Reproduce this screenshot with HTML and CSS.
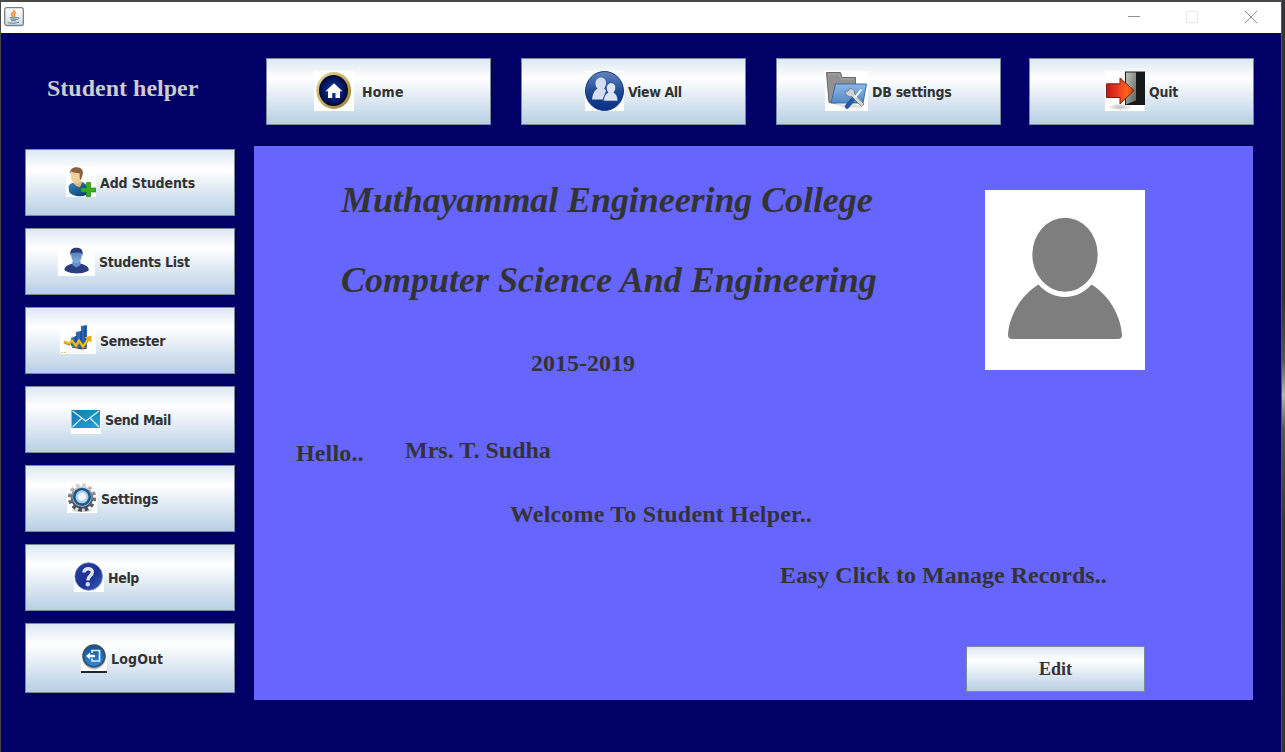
FILE: index.html
```html
<!DOCTYPE html>
<html lang="en">
<head>
<meta charset="utf-8">
<title>Student helper</title>
<link rel="stylesheet" href="styles.css">
</head>
<body>
<div class="window">
  <div class="titlebar">
    <svg class="java" width="20" height="20" viewBox="0 0 20 20">
      <defs><linearGradient id="jg" x1="0" y1="0" x2="0" y2="1"><stop offset="0" stop-color="#fff"/><stop offset="1" stop-color="#dcdcdc"/></linearGradient></defs>
      <rect x=".7" y=".7" width="18.6" height="17.8" rx="2" fill="url(#jg)" stroke="#6d8496" stroke-width="1.3"/>
      <path d="M10.500 3c.8 1.500-3 2.300-3 4.300 0 1 .8 1.500 1.500 2.500M12 5.500c-2.500 1-2.500 2-1.500 2.800.5.700 0 1.200-.5 1.700" fill="none" stroke="#e8872c" stroke-width="1.500"/>
      <path d="M5.500 10.700h8M6.500 12.200h6.500M7 13.700h5M13.500 10.500c2-.3 2 1.500-.5 2M3.500 15.500c3 1 8 1 11.500-.3" fill="none" stroke="#5382a1" stroke-width="1"/>
    </svg>
    <svg class="controls" width="134" height="16" viewBox="0 0 134 16" fill="none" shape-rendering="crispEdges">
      <path d="M1 7.500h12" stroke="#929292"/>
      <rect x="59.500" y="2.500" width="11" height="11" stroke="#e8e8e8"/>
      <path d="M118 2l12 12M130 2l-12 12" stroke="#8a8a8a" shape-rendering="auto"/>
    </svg>
  </div>
  <div class="header">
    <div class="brand">Student helper</div>
    <div class="nav">
      <button class="btn home">
        <svg width="40" height="40" viewBox="0 0 40 40">
          <defs><linearGradient id="gold" x1="0" y1="0" x2="1" y2="1"><stop offset="0" stop-color="#e4d8a0"/><stop offset=".5" stop-color="#c5ad62"/><stop offset="1" stop-color="#9a7a30"/></linearGradient>
          <radialGradient id="navy"><stop offset="0" stop-color="#1448a0"/><stop offset=".65" stop-color="#041a6a"/><stop offset="1" stop-color="#010830"/></radialGradient></defs>
          <rect width="40" height="40" fill="#fff"/>
          <ellipse cx="19.700" cy="19.500" rx="17.500" ry="18.500" fill="url(#gold)"/>
          <ellipse cx="19.500" cy="19.500" rx="14.500" ry="15.500" fill="url(#navy)"/>
          <path d="M20 12.300l8.500 8H26V27h-4.500v-5h-3.300v5H14v-6.700h-2.500z" fill="#fff"/>
        </svg><span class="label">Home</span>
      </button>
      <button class="btn view">
        <svg width="39" height="40" viewBox="0 0 39 40">
          <defs><linearGradient id="vb" x1="0" y1="0" x2="0" y2="1"><stop offset="0" stop-color="#6485bb"/><stop offset=".3" stop-color="#3b63a7"/><stop offset=".55" stop-color="#194691"/><stop offset="1" stop-color="#0c2f87"/></linearGradient></defs>
          <rect width="39" height="40" fill="#fff"/>
          <ellipse cx="19.500" cy="20" rx="19" ry="19.500" fill="url(#vb)" stroke="#163b7b"/>
          <path d="M7 28.500c.5-5 2-8.500 5.500-11-3.500-3-2.500-10.700 3.300-11 6 .2 6.500 7 3.300 11l2 2-3.300 9z" fill="#d5deee"/>
          <path d="M18.500 30c.3-4 1.500-7 4.500-8.500-3-4-1.500-9.500 3.200-9.800 4.800.3 5.800 6 2.600 9.800 3 1.500 3.700 4.500 4.200 8.500z" fill="#dce4f2" stroke="#2a5097" stroke-width=".7"/>
        </svg><span class="label">View All</span>
      </button>
      <button class="btn db">
        <svg width="43" height="40" viewBox="0 0 43 40">
          <defs><linearGradient id="fold" x1="0" y1="0" x2="0" y2="1"><stop offset="0" stop-color="#8cb8e8"/><stop offset="1" stop-color="#5287c6"/></linearGradient></defs>
          <rect width="43" height="40" fill="#fff"/>
          <path d="M5 32l17 2 8-1 8 4-20-1z" fill="#ddd"/>
          <path d="M1.500 1.500h14l1.500 5h13.500v7L11 32 4 31.500z" fill="#929090" stroke="#696969"/>
          <path d="M3.500 3h10.500l2 5H29" fill="none" stroke="#aaa9a5"/>
          <path d="M10.500 13H41.500L38 32H6z" fill="url(#fold)" stroke="#3d6ba7"/>
          <path d="M20 20c3 .8 4 0 4.500-2.500 3.500 0 5.500 2 5 5l9.500 10.500-2.500 2.500-10-10c-3 .5-6-1.500-6.500-5.500z" fill="#d0d2d4" stroke="#66717e" stroke-width=".8"/>
          <path d="M36.500 18.500l-9 11" stroke="#e8edf2" stroke-width="2"/><path d="M27.500 29l-5.500 6.500" stroke="#245a9f" stroke-width="4.500" stroke-linecap="round"/>
        </svg><span class="label">DB settings</span>
      </button>
      <button class="btn quit">
        <svg width="40" height="40" viewBox="0 0 40 40">
          <defs><linearGradient id="red" x1="0" y1="0" x2="1" y2="0"><stop offset="0" stop-color="#c5161b"/><stop offset=".4" stop-color="#e83a20"/><stop offset=".75" stop-color="#ff641b"/><stop offset="1" stop-color="#d43817"/></linearGradient>
          <linearGradient id="door" x1="0" y1="0" x2="1" y2="1"><stop offset="0" stop-color="#c2c5bd"/><stop offset="1" stop-color="#596057"/></linearGradient>
          <radialGradient id="sh"><stop offset="0" stop-color="#bbb"/><stop offset="1" stop-color="#fff"/></radialGradient></defs>
          <rect width="40" height="40" fill="#fff"/>
          <ellipse cx="15" cy="36" rx="13" ry="3.500" fill="url(#sh)"/>
          <rect x="20" y=".5" width="20" height="33.500" fill="#171819"/>
          <path d="M21 1.500h10v28L21 33.500z" fill="url(#door)"/>
          <path d="M1.500 12.800H15V7l14 12.500L15 33v-6.500H1.500z" fill="url(#red)" stroke="#702117"/>
        </svg><span class="label">Quit</span>
      </button>
    </div>
  </div>
  <div class="main">
    <div class="sidebar">
      <button class="btn add">
        <svg width="30" height="30" viewBox="0 0 30 30">
          <defs><linearGradient id="blu" x1="0" y1="0" x2="1" y2="1"><stop offset="0" stop-color="#3587b8"/><stop offset="1" stop-color="#07396d"/></linearGradient></defs>
          <rect width="30" height="30" fill="#fff"/>
          <path d="M2.500 19c2-3 4-3.500 6.500-3.500l6-.5c4 .5 6 3 6.500 7l-1 6C14 30.500 5 29 3 24.500z" fill="url(#blu)"/>
          <path d="M7 14l7-1 2 3-2 4c-3 0-5-2-7-4z" fill="#e5b77d"/>
          <ellipse cx="10.300" cy="9" rx="5.500" ry="7.500" fill="#f0cf9c"/>
          <path d="M4.200 7C3.800 2.500 6 .3 10.500.3c5 0 7.500 3.200 6 8L14.800 13c-1-1-1.500-3-1-6.500C10 6 7 5.500 5.500 4.500z" fill="#866242"/>
          <path d="M20.500 15.500h4V21H30v4h-5.500v5h-4v-5H15v-4h5.500z" fill="#3aac22" stroke="#238a18" stroke-width=".7"/>
        </svg><span class="label">Add Students</span>
      </button>
      <button class="btn list">
        <svg width="37" height="30" viewBox="0 0 37 30">
          <defs><linearGradient id="face" x1="0" y1="0" x2="0" y2="1"><stop offset="0" stop-color="#466eb0"/><stop offset="1" stop-color="#83afe0"/></linearGradient></defs>
          <rect width="37" height="30" fill="#fff"/>
          <path d="M6.500 23c1-3.500 4-4 8-5.500h8c4 1.500 7.500 2 8.500 6.500-4 4.500-20 4.500-24.500 0z" fill="#293f82"/>
          <path d="M14.500 15h8v4l-4 2.500-4-2.500z" fill="#6590ca"/>
          <ellipse cx="18.500" cy="9.500" rx="5.300" ry="7.500" fill="url(#face)"/>
          <path d="M12.500 10C11.500 4 14 1.800 18.500 1.800S25.500 4 24.500 10c-.5-3-1.500-3.500-6-3.500S13 7 12.500 10z" fill="#263c70"/>
        </svg><span class="label">Students List</span>
      </button>
      <button class="btn semester">
        <svg width="36" height="29" viewBox="0 0 36 29">
          <rect width="36" height="29" fill="#fff"/>
          <path d="M11 13l5-2v-4l5-1V1l6-1v22l-5 2-11-3z" fill="#2d65bb"/><path d="M16 11v12M21 6v17M25 1v21" stroke="#173b85"/>
          <path d="M12 22l10 2 5-1" fill="none" stroke="#26385e"/>
          <path d="M4 17l5 2 3-3 4 5 3-5 4 6 6-9" fill="none" stroke="#b98f12" stroke-width="2.800"/><path d="M4 16.500l5 2 3-3 4 5 3-5 4 6 6-9" fill="none" stroke="#edc21c" stroke-width="1.800"/>
          <path d="M24.500 12.500l7-2v7z" fill="#e0ae18"/><path d="M1 27.500h6" stroke="#e4c860" stroke-dasharray="2 1"/><path d="M8 27.500h22" stroke="#eee" stroke-dasharray="2 1"/>
        </svg><span class="label">Semester</span>
      </button>
      <button class="btn mail">
        <svg width="30" height="30" viewBox="0 0 30 30">
          <defs><linearGradient id="env" x1="0" y1="0" x2="1" y2="1"><stop offset="0" stop-color="#1479b5"/><stop offset="1" stop-color="#24a4d0"/></linearGradient></defs>
          <rect width="30" height="30" fill="#fff"/><rect x=".5" y="6" width="28.500" height="18" fill="url(#env)"/>
          <path d="M1.500 7l13.300 10L28 7M1.500 23l9.500-9M28 23l-9-9" fill="none" stroke="#e0f3fb" stroke-width="1.200"/>
        </svg><span class="label">Send Mail</span>
      </button>
      <button class="btn settings">
        <svg width="30" height="30" viewBox="0 0 30 30">
          <defs><linearGradient id="gear" x1="0" y1="0" x2="0" y2="1"><stop offset="0" stop-color="#d9d2cc"/><stop offset=".4" stop-color="#7c828b"/><stop offset="1" stop-color="#404a58"/></linearGradient></defs>
          <rect width="30" height="30" fill="#fff"/><ellipse cx="15" cy="27.500" rx="10" ry="1.500" fill="#d5ccc8"/>
          <circle cx="15" cy="14.500" r="12.500" fill="none" stroke="url(#gear)" stroke-width="3.400" stroke-dasharray="3.600 2.945"/>
          <circle cx="15" cy="14.500" r="10.300" fill="#c3c8ce" stroke="url(#gear)" stroke-width="2"/>
          <circle cx="15" cy="13.800" r="7.800" fill="#a8cdea" stroke="#1b5a90" stroke-width="2.600"/>
          <circle cx="15" cy="13.800" r="4" fill="#f5f8fa" stroke="#d4e4f0" stroke-width="1.500" stroke-dasharray="2 1.100"/>
        </svg><span class="label">Settings</span>
      </button>
      <button class="btn help">
        <svg width="30" height="30" viewBox="0 0 30 30">
          <defs><linearGradient id="hb" x1="0" y1="0" x2="1" y2="1"><stop offset="0" stop-color="#2642a0"/><stop offset=".55" stop-color="#1b2f92"/><stop offset="1" stop-color="#3963c2"/></linearGradient></defs>
          <rect width="30" height="30" fill="#fff"/><circle cx="14.700" cy="14.500" r="13.800" fill="url(#hb)" stroke="#7288bd" stroke-width=".8"/>
          <path d="M10 10.500C10 5.500 18.700 5.800 18.300 10.300c-.2 3.200-4.500 4-4.500 8.200" fill="none" stroke="#e0e0ea" stroke-width="3.500"/><circle cx="13.800" cy="22.300" r="2.200" fill="#d5dcec"/>
        </svg><span class="label">Help</span>
      </button>
      <button class="btn logout">
        <svg width="26" height="30" viewBox="0 0 26 30">
          <defs><linearGradient id="lb" x1="0" y1="0" x2="0" y2="1"><stop offset="0" stop-color="#164c96"/><stop offset="1" stop-color="#2c8de0"/></linearGradient></defs>
          <rect width="26" height="30" fill="#fff"/><ellipse cx="13" cy="14" rx="12" ry="12.500" fill="#b6c2cd"/><circle cx="13" cy="13" r="10.800" fill="url(#lb)" stroke="#385269" stroke-width="1.800"/>
          <path d="M11 10V7.500h7.500v10.500H11v-2.500" fill="none" stroke="#d9f0ff" stroke-width="1.700"/><path d="M5 13l4-3.500v2.300h5v2.400H9v2.300z" fill="#fff"/>
          <rect y="28" width="26" height="2" fill="#232527"/>
        </svg><span class="label">LogOut</span>
      </button>
    </div>
    <div class="panel">
      <div class="top">
        <div class="titles">
          <div class="title college">Muthayammal Engineering College</div>
          <div class="title dept">Computer Science And Engineering</div>
          <div class="text years">2015-2019</div>
        </div>
        <svg class="photo" width="160" height="180" viewBox="0 0 160 180">
          <rect width="160" height="180" fill="#fff"/>
          <ellipse cx="80" cy="64.700" rx="32.700" ry="37" fill="#7e7e7e"/>
          <path d="M53.500 94.500C60 102 69 107 80 107s20-5 26.500-12.500C124 105 136 126 137 145q0 4-4 4H27q-4 0-4-4C24 126 36 105 53.500 94.500z" fill="#7e7e7e"/>
        </svg>
      </div>
      <div class="greeting"><div class="text hello">Hello..</div><div class="text">Mrs. T. Sudha</div></div>
      <div class="text welcome">Welcome To Student Helper..</div>
      <div class="text easy">Easy Click to Manage Records..</div>
      <button class="btn edit">Edit</button>
    </div>
  </div>
</div>
</body>
</html>
```
FILE: styles.css
```css
* { box-sizing: border-box; }
body {
  margin: 0;
  width: 1285px;
  height: 752px;
  overflow: hidden;
  padding: 2px 4px 0 1px;
  background:
    linear-gradient(90deg, #55555a 1px, transparent 1px) 1281px 0 / 4px 752px no-repeat,
    linear-gradient(#333338 0, #333338 300px, #55565a 360px, #b4b6b4 395px, #55565a 430px, #38383c 520px, #333338 100%) 1281px 0 / 4px 752px no-repeat,
    #48484a;
}
.window { height: 750px; background: #000066; }
.titlebar {
  display: flex;
  justify-content: space-between;
  height: 31px;
  padding: 5px 20px 0 3px;
  background: #fff;
}
.controls { margin: 2px 0 0; }
.header { display: flex; height: 113px; padding: 25px 27px 0 46px; }
.brand {
  width: 219px;
  padding-top: 16px;
  font: bold 24px/28px "Liberation Serif", serif;
  color: #ccc;
}
.nav { display: flex; gap: 30px; }
.btn {
  display: flex;
  align-items: flex-start;
  gap: 4px;
  flex: none;
  margin: 0;
  padding: 0;
  border: 1px solid #7a8a99;
  border-radius: 0;
  background: linear-gradient(#dde8f3 0, #fff 30%, #b8cfe5 100%);
  color: #333;
  font: bold 14px/20px "DejaVu Sans Condensed", "DejaVu Sans", sans-serif;
  font-stretch: condensed;
  text-align: left;
}
.nav .btn { width: 225px; height: 67px; padding-top: 12px; }
.nav .label { margin-top: 11px; }
.label { white-space: nowrap; }
.nav .home { padding-left: 47px; gap: 8px; letter-spacing: .2px; }
.nav .view { padding-left: 63px; letter-spacing: -.4px; }
.nav .db { padding-left: 48px; letter-spacing: -.27px; }
.nav .quit { padding-left: 75px; margin-left: -2px; letter-spacing: -.25px; }
.main { display: flex; gap: 19px; padding-left: 24px; }
.sidebar { display: flex; flex-direction: column; gap: 12px; width: 210px; padding-top: 3px; }
.sidebar .btn { height: 67px; padding-top: 17px; }
.sidebar .label { margin-top: 6px; }
.sidebar .add { padding-left: 40px; letter-spacing: -.1px; }
.sidebar .list { padding-left: 32px; letter-spacing: -.27px; }
.sidebar .semester { padding-left: 34px; letter-spacing: -.3px; }
.sidebar .mail { padding-left: 45px; letter-spacing: -.42px; }
.sidebar .settings { padding-left: 41px; letter-spacing: -.27px; }
.sidebar .help { padding-left: 48px; letter-spacing: -.35px; }
.sidebar .logout { height: 70px; padding: 19px 0 0 55px; letter-spacing: .15px; }
.panel { width: 999px; height: 554px; padding-top: 34px; background: #6666ff; }
.top { display: flex; justify-content: space-between; height: 197px; padding: 0 108px 0 87px; }
.photo { margin-top: 10px; }
.title { font: italic bold 36px/40px "Liberation Serif", serif; color: #333; white-space: nowrap; }
.college { letter-spacing: -.08px; }
.dept { margin-top: 40px; }
.text { font: bold 24px/28px "Liberation Serif", serif; color: #333; white-space: nowrap; }
.years { margin: 49px 0 0 190px; }
.greeting { display: flex; height: 31px; margin: 59px 0 0 42px; }
.hello { width: 109px; margin-top: 3px; letter-spacing: .15px; }
.welcome { margin: 33px 0 0 256px; letter-spacing: .18px; }
.easy { margin: 33px 0 0 526px; }
.edit {
  justify-content: center;
  align-items: center;
  width: 179px;
  height: 46px;
  margin: 57px 0 0 712px;
  font: bold 18px/20px "Liberation Serif", serif;
}
```
